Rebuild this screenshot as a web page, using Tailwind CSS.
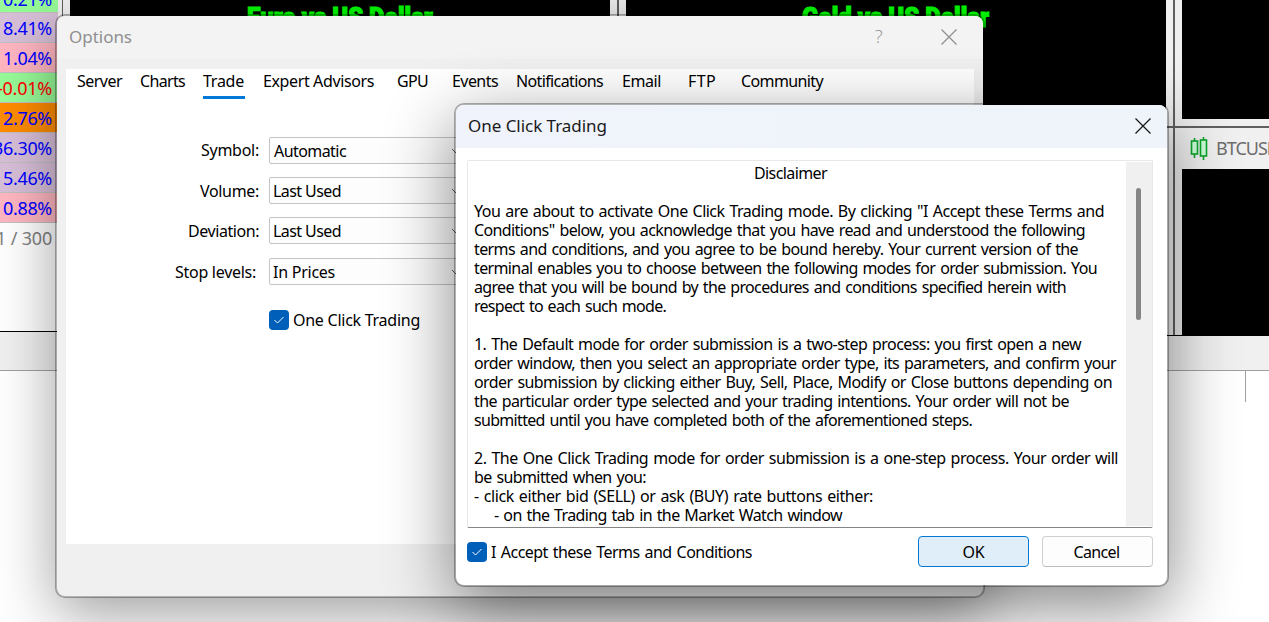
<!DOCTYPE html>
<html lang="en">
  <head>
    <meta charset="UTF-8" />
    <meta name="viewport" content="width=device-width, initial-scale=1.0" />
    <title>One Click Trading</title>
    <script src="https://cdn.jsdelivr.net/npm/@tailwindcss/browser@4"></script>
  </head>
  <body
    class="relative w-[1269px] h-[622px] overflow-hidden bg-white text-black text-[16px] leading-[19px] font-['Noto_Sans',sans-serif]"
  >
    <!-- Terminal: market watch + charts -->
    <div class="flex flex-col h-full">
      <div class="flex h-[336px]">
        <!-- Market watch -->
        <div class="w-[58px] shrink-0 flex flex-col h-[332px] border-b border-black text-[18px] leading-[31px] text-[#0000ff]">
          <div class="h-[13px] shrink-0 flex items-end justify-end pr-[6px] bg-[#98fb98] border-b border-[#c0c0c0]"><span class="-mb-[3px]" data-w="49">0.21%</span></div>
          <div class="h-[30px] shrink-0 flex justify-end pr-[6px] bg-[#d8bfd8] border-b border-[#c0c0c0]"><span data-w="49">8.41%</span></div>
          <div class="h-[30px] shrink-0 flex justify-end pr-[6px] bg-[#ffb6c1] border-b border-[#c0c0c0]"><span data-w="49">1.04%</span></div>
          <div class="h-[30px] shrink-0 flex justify-end pr-[6px] bg-[#98fb98] border-b border-[#c0c0c0] text-[#ff0000]"><span data-w="55">-0.01%</span></div>
          <div class="h-[30px] shrink-0 flex justify-end pr-[6px] bg-[#ff8c00] border-b border-[#c0c0c0]"><span data-w="49">2.76%</span></div>
          <div class="h-[30px] shrink-0 flex justify-end pr-[6px] bg-[#d8bfd8] border-b border-[#c0c0c0]"><span data-w="59">36.30%</span></div>
          <div class="h-[30px] shrink-0 flex justify-end pr-[6px] bg-[#d8bfd8] border-b border-[#c0c0c0]"><span data-w="49">5.46%</span></div>
          <div class="h-[30px] shrink-0 flex justify-end pr-[6px] bg-[#ffb6c1] border-b border-[#c0c0c0]"><span data-w="49">0.88%</span></div>
          <div class="h-[30px] shrink-0 flex justify-end pr-[6px] text-[#808080] whitespace-nowrap"><span data-w="66">41 / 300</span></div>
        </div>
        <div class="w-1 shrink-0 bg-[#f0f0f0]"></div>
        <div class="w-px shrink-0 bg-[#606060]"></div>
        <div class="w-[7px] shrink-0 bg-[#f0f0f0]"></div>
        <!-- EURUSD -->
        <div class="w-[540px] shrink-0 bg-black pt-[4px] pl-[177px]">
          <div class="w-[186px] text-[27px] leading-[28px] font-black text-[#00ff00] whitespace-nowrap font-['Roboto',sans-serif] [-webkit-text-stroke:1.2px_#00ff00]">
            <span class="inline-block origin-left" data-x="186">Euro vs US Dollar</span>
          </div>
        </div>
        <div class="w-4 shrink-0 flex justify-center bg-[#f0f0f0]"><div class="w-[2px] bg-[#606060]"></div></div>
        <!-- XAUUSD -->
        <div class="w-[540px] shrink-0 bg-black pt-[4px] pl-[176px]">
          <div class="w-[187px] text-[27px] leading-[28px] font-black text-[#00ff00] whitespace-nowrap font-['Roboto',sans-serif] [-webkit-text-stroke:1.2px_#00ff00]">
            <span class="inline-block origin-left" data-x="187">Gold vs US Dollar</span>
          </div>
        </div>
        <div class="w-2 shrink-0 flex flex-col bg-[#f0f0f0] border-b border-black">
          <div class="h-[126px]"></div>
          <div class="h-[2px] bg-[#606060]"></div>
        </div>
        <div class="w-[95px] shrink-0 relative flex flex-col bg-[#f0f0f0] border-b border-black">
          <div class="ml-2 h-[119px] bg-black"></div>
          <div class="h-[7px]"></div>
          <div class="h-[2px] bg-[#606060]"></div>
          <!-- BTCUSD title -->
          <div class="h-[41px] pl-4 flex items-center gap-[8px] text-[#6d6d6d] text-[18px] overflow-hidden">
            <svg class="w-[18px] h-[23px] shrink-0" viewBox="0 0 18 23" fill="#ccffd8" stroke="#0ca52c" stroke-width="1.6">
              <path d="M4.5 1v20M13.5 0v23" />
              <rect x="1.5" y="4" width="6" height="13" />
              <rect x="10.5" y="3" width="6" height="16" />
            </svg>
            <span class="whitespace-nowrap" data-w="63">BTCUSD</span>
          </div>
          <div class="ml-2 grow bg-black"></div>
          <div class="absolute left-[-1px] top-0 w-[2px] h-[335px] bg-[#606060]"></div>
        </div>
      </div>
      <div class="flex h-[35px]">
        <div class="w-[58px] -mt-1 bg-[#f0f0f0] border-b border-[#a0a0a0]"></div>
        <div class="grow bg-[#f0f0f0] border-b border-[#a0a0a0]"></div>
      </div>
      <div class="grow flex justify-end pr-[23px]"><div class="w-px h-[31px] bg-[#a0a0a0]"></div></div>
    </div>

    <!-- Options window -->
    <div
      class="absolute left-[55px] top-[14px] w-[930px] h-[584px] rounded-[10px] border-2 border-black/30 bg-[#f0f0f0] bg-clip-padding shadow-[0_16px_60px_rgba(0,0,0,0.38)] flex flex-col"
    >
      <div class="h-[43px] shrink-0 rounded-t-lg bg-[#f3f3f3] flex items-center pb-[2px] pl-3 pr-[26px] text-[#8f8f8f] text-[17px]">
        <span data-w="63">Options</span>
        <span class="ml-auto w-[9px] text-[18px] font-light font-['Open_Sans',sans-serif]">?</span>
        <svg class="ml-[57px] w-4 h-4" viewBox="0 0 16 16" fill="none" stroke="#8f8f8f" stroke-width="1.3">
          <path d="M.5.5l15 15M15.5.5l-15 15" />
        </svg>
      </div>
      <div class="mt-[10px] ml-[9px] w-[908px] h-[475px] bg-white">
        <div class="flex pl-[11px] pt-[3px] h-[30px] whitespace-nowrap">
          <span data-w="45">Server</span>
          <span class="ml-[18px]" data-w="45">Charts</span>
          <div class="ml-[18px] w-[42px] h-[27px] border-b-[3px] border-[#0078d7]"><span data-w="41">Trade</span></div>
          <span class="ml-[18px]" data-w="111">Expert Advisors</span>
          <span class="ml-[23px]" data-w="31">GPU</span>
          <span class="ml-[24px]" data-w="46">Events</span>
          <span class="ml-[18px]" data-w="87">Notifications</span>
          <span class="ml-[19px]" data-w="39">Email</span>
          <span class="ml-[27px]" data-w="28">FTP</span>
          <span class="ml-[25px]" data-w="82">Community</span>
        </div>

        <div class="mt-[38px] flex flex-col gap-[13px]">
          <div class="flex items-center">
            <div class="w-[193px] mr-[10px] flex justify-end"><span data-w="58">Symbol:</span></div>
            <div class="w-[203px] h-[27px] border border-[#c4c4c4] rounded-[2px] bg-[#fdfdfd] flex items-center justify-between pl-[4px] pr-[11px]">
              <span class="mt-px" data-w="72">Automatic</span>
              <svg class="w-2 h-2" viewBox="0 0 8 8" fill="none" stroke="#606060"><path d="M0 2l4 4 4-4" /></svg>
            </div>
          </div>
          <div class="flex items-center">
            <div class="w-[193px] mr-[10px] pt-[2px] flex justify-end"><span data-w="59">Volume:</span></div>
            <div class="w-[203px] h-[27px] border border-[#c4c4c4] rounded-[2px] bg-[#fdfdfd] flex items-center justify-between pl-[3px] pr-[11px]">
              <span class="mt-[2px]" data-w="68">Last Used</span>
              <svg class="w-2 h-2" viewBox="0 0 8 8" fill="none" stroke="#606060"><path d="M0 2l4 4 4-4" /></svg>
            </div>
          </div>
          <div class="flex items-center">
            <div class="w-[193px] mr-[10px] pt-[2px] flex justify-end"><span data-w="71">Deviation:</span></div>
            <div class="w-[203px] h-[27px] border border-[#c4c4c4] rounded-[2px] bg-[#fdfdfd] flex items-center justify-between pl-[3px] pr-[11px]">
              <span class="mt-[2px]" data-w="68">Last Used</span>
              <svg class="w-2 h-2" viewBox="0 0 8 8" fill="none" stroke="#606060"><path d="M0 2l4 4 4-4" /></svg>
            </div>
          </div>
          <div class="flex items-center mt-px">
            <div class="w-[190px] mr-[13px] pt-[2px] flex justify-end"><span data-w="81">Stop levels:</span></div>
            <div class="w-[203px] h-[27px] border border-[#c4c4c4] rounded-[2px] bg-[#fdfdfd] flex items-center justify-between pl-[3px] pr-[11px]">
              <span class="mt-[2px]" data-w="62">In Prices</span>
              <svg class="w-2 h-2" viewBox="0 0 8 8" fill="none" stroke="#606060"><path d="M0 2l4 4 4-4" /></svg>
            </div>
          </div>
          <div class="mt-3 pl-[203px] flex items-center gap-1">
            <div class="w-5 h-5 rounded bg-[#005fb8] flex items-center justify-center">
              <svg class="w-3 h-3" viewBox="0 0 12 12" fill="none" stroke="#fff"><path d="M1.5 6l3 3 6-6" /></svg>
            </div>
            <span class="whitespace-nowrap" data-w="127">One Click Trading</span>
          </div>
        </div>
      </div>
    </div>

    <!-- Disclaimer dialog -->
    <div
      class="absolute left-[454px] top-[103px] w-[715px] h-[484px] rounded-[10px] border-2 border-black/30 bg-white bg-clip-padding shadow-[0_20px_68px_rgba(0,0,0,0.48)] flex flex-col"
    >
      <div class="h-[43px] shrink-0 rounded-t-lg bg-linear-to-r from-[#f0f3fb] to-[#eef4f9] flex items-center justify-between pb-[2px] pl-3 pr-4 text-[17px] text-[#1a1a1a]">
        <span data-w="139">One Click Trading</span>
        <svg class="w-4 h-4" viewBox="0 0 16 16" fill="none" stroke="#1a1a1a" stroke-width="1.3">
          <path d="M.5.5l15 15M15.5.5l-15 15" />
        </svg>
      </div>
      <div class="mt-3 ml-[11px] w-[686px] h-[368px] shrink-0 rounded-[2px] border border-[#e8e8e8] border-b-[#858585] flex justify-between py-px pl-px">
        <div class="pl-[5px] pt-[2px] w-[652px] h-[364px] overflow-hidden whitespace-nowrap flex flex-col [word-spacing:1.3px]">
          <div class="pl-[280px]"><span data-w="73">Disclaimer</span></div>
          <div class="mt-[19px]"><span data-w="630">You are about to activate One Click Trading mode. By clicking "I Accept these Terms and</span></div>
          <div><span data-w="611">Conditions" below, you acknowledge that you have read and understood the following</span></div>
          <div><span data-w="604">terms and conditions, and you agree to be bound hereby. Your current version of the</span></div>
          <div><span data-w="623">terminal enables you to choose between the following modes for order submission. You</span></div>
          <div><span data-w="592">agree that you will be bound by the procedures and conditions specified herein with</span></div>
          <div><span data-w="192">respect to each such mode.</span></div>
          <div class="mt-[19px]"><span data-w="607">1. The Default mode for order submission is a two-step process: you first open a new</span></div>
          <div><span data-w="642">order window, then you select an appropriate order type, its parameters, and confirm your</span></div>
          <div><span data-w="638">order submission by clicking either Buy, Sell, Place, Modify or Close buttons depending on</span></div>
          <div><span data-w="595">the particular order type selected and your trading intentions. Your order will not be</span></div>
          <div><span data-w="498">submitted until you have completed both of the aforementioned steps.</span></div>
          <div class="mt-[19px]"><span data-w="644">2. The One Click Trading mode for order submission is a one-step process. Your order will</span></div>
          <div><span data-w="172">be submitted when you:</span></div>
          <div><span data-w="399">- click either bid (SELL) or ask (BUY) rate buttons either:</span></div>
          <div class="pl-5"><span data-w="348">- on the Trading tab in the Market Watch window</span></div>
        </div>
        <div class="w-[26px] shrink-0 h-[364px] bg-[#f0f0f0] pt-[26px] pl-[10px]">
          <div class="w-[5px] h-[132px] rounded-full bg-[#858585]"></div>
        </div>
      </div>
      <div class="mt-2 pl-[11px] pr-[14px] flex items-center h-[31px]">
        <div class="w-5 h-5 rounded bg-[#005fb8] flex items-center justify-center">
          <svg class="w-3 h-3" viewBox="0 0 12 12" fill="none" stroke="#fff"><path d="M1.5 6l3 3 6-6" /></svg>
        </div>
        <span class="ml-1 mt-px whitespace-nowrap [word-spacing:1.3px]" data-w="261">I Accept these Terms and Conditions</span>
        <button class="ml-auto w-[111px] h-[31px] pt-px rounded border border-[#0078d4] bg-[#e0eef9]"><span data-w="22">OK</span></button>
        <button class="ml-[13px] w-[111px] h-[31px] pt-px pr-[2px] rounded border border-[#d0d0d0] border-b-[#bcbcbc] bg-[#fdfdfd]"><span data-w="46">Cancel</span></button>
      </div>
    </div>

    <script>
      function fitLabels() {
        // spread the letters so that each label takes its data-w width
        document.querySelectorAll("[data-w]").forEach((el) => {
          el.style.letterSpacing = "0px";
          const extra = el.dataset.w - el.getBoundingClientRect().width;
          el.style.letterSpacing = extra / el.textContent.length + "px";
        });
        // chart captions are squeezed horizontally
        document.querySelectorAll("[data-x]").forEach((el) => {
          el.style.transform = `scaleX(${el.dataset.x / el.offsetWidth})`;
        });
      }
      window.addEventListener("load", () => {
        fitLabels();
        document.fonts.ready.then(fitLabels);
      });
    </script>
  </body>
</html>
